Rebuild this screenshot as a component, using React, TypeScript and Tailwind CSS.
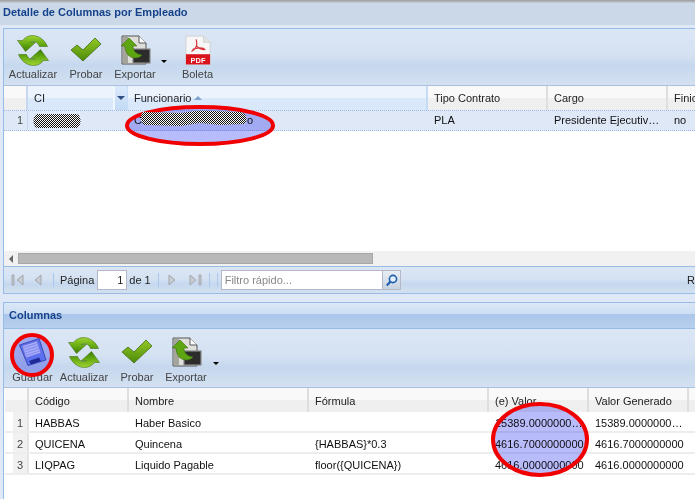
import React from "react";

const ARROW = "M30 11 C27 4 21 0 15 0 C11 0 7 2 5 5 L0 5 L8 16 L18 7 L13 7 C16 5 20 6 22 11 Z";

const Refresh = () => (
  <svg width="32" height="31" viewBox="-0.5 -0.5 32 31">
    <defs>
      <linearGradient id="rg" x1="0" y1="0" x2="0" y2="1">
        <stop offset="0" stopColor="#9fd433" />
        <stop offset="0.6" stopColor="#5fa50f" />
        <stop offset="1" stopColor="#3c7a06" />
      </linearGradient>
    </defs>
    <path d={ARROW} fill="url(#rg)" stroke="#46761a" strokeWidth="0.6" />
    <path d={ARROW} transform="rotate(180 15.5 15)" fill="url(#rg)" stroke="#46761a" strokeWidth="0.6" />
  </svg>
);

const Check = () => (
  <svg width="32" height="26" viewBox="0 0 32 26">
    <defs>
      <linearGradient id="cg" x1="0" y1="0" x2="0" y2="1">
        <stop offset="0" stopColor="#93c926" />
        <stop offset="1" stopColor="#4c8a08" />
      </linearGradient>
    </defs>
    <path d="M1 13 L7 8 L13 13 L25 1 L31 7 L13 24 Z" fill="url(#cg)" stroke="#3f6d10" strokeWidth="0.8" strokeLinejoin="round" />
  </svg>
);

const Export = () => (
  <svg width="31" height="30" viewBox="0 0 31 30">
    <path d="M2 1 H19 L26 8 V29 H2 Z" fill="#dededa" stroke="#555" strokeWidth="1" />
    <path d="M3 2 H8 V28 H3 Z" fill="#a5a59c" />
    <path d="M19 1 V8 H26" fill="#fff" stroke="#555" strokeWidth="1" />
    <rect x="13" y="14" width="17" height="14" fill="#2c2c2c" stroke="#8a8a8a" strokeWidth="1.2" />
    <path d="M9 3 L17 11 H13 C13 16 16 19 22 20 C19 24 12 24 8 20 C6 17 5 14 5 11 H1 Z" fill="#5ea512" stroke="#3c6d10" strokeWidth="0.6" />
  </svg>
);

const Pdf = () => (
  <svg width="26" height="31" viewBox="0 0 28 32">
    <path d="M1 0.5 H20 L27 7 V31 H1 Z" fill="#f7f7f7" stroke="#cfcfcf" />
    <path d="M20 0.5 V7 H27" fill="#e4e4e4" stroke="#cfcfcf" />
    <rect x="1" y="20" width="26" height="11" fill="#d8131b" />
    <path d="M12 4 C13 8 14 13 7 17 M12 10 C14 14 18 15 22 15 M8 15 C12 13 17 13 21 14" fill="none" stroke="#d8343a" strokeWidth="1.3" />
    <text x="14" y="29" textAnchor="middle" fill="#fff" fontSize="8" fontWeight="700" fontFamily="Liberation Sans, sans-serif">PDF</text>
  </svg>
);

const Floppy = () => (
  <svg width="28" height="28" viewBox="0 0 28 28">
    <path d="M0.5 7 L20 0.5 L27 22 L9 27.5 Z" fill="#7f96f2" stroke="#3a4cab" strokeWidth="0.8" />
    <path d="M3 8 L18 3 L22 15 L7 20 Z" fill="#e2e5ff" stroke="#7d88d0" strokeWidth="0.5" />
    <path d="M10 23 L20 19.5 L22 23 L12 26.5 Z" fill="#2c3a98" />
    <path d="M4 10 L18.5 5.5 M5 12.5 L19.5 8 M6 15 L20 10.5 M7 17.5 L21 13" stroke="#a8b1e8" strokeWidth="0.7" />
  </svg>
);

const Blob = ({ w, d }: { w: number; d: string }) => (
  <svg width={w} height="16" viewBox={`0 0 ${w} 16`} className="block">
    <defs>
      <pattern id={`ck${w}`} width="2" height="2" patternUnits="userSpaceOnUse">
        <rect width="2" height="2" fill="#fff" />
        <rect width="1" height="1" fill="#111" />
        <rect x="1" y="1" width="1" height="1" fill="#111" />
      </pattern>
    </defs>
    <path d={d} fill={`url(#ck${w})`} />
  </svg>
);

const Tool = ({ label, w, low, children }: { label: string; w: string; low?: boolean; children: React.ReactNode }) => (
  <div className={`flex flex-col items-center ${w}`}>
    <div className="h-[34px] flex items-center justify-center">{children}</div>
    <span className={`text-[11px] leading-[14px] text-[#444] whitespace-nowrap ${low ? "mt-[1px]" : ""}`}>{label}</span>
  </div>
);

const Caret = () => <div className="w-0 h-0 border-x-[3px] border-x-transparent border-t-[3px] border-t-black mt-[2px]" />;

const HCell = ({ w, children, active }: { w: string; children?: React.ReactNode; active?: boolean }) => (
  <div
    className={`${w} shrink-0 h-full flex items-center pl-[6px] text-[11px] text-[#222] border-r-2 whitespace-nowrap overflow-hidden ${
      active
        ? "border-[#c5daf5] bg-[linear-gradient(#ebf3fd_0,#ebf3fd_50%,#d9e8fb_50%,#d9e8fb_100%)]"
        : "border-[#dedede] bg-[linear-gradient(#f9f9f9_0,#f9f9f9_50%,#efefef_50%,#efefef_100%)]"
    }`}
  >
    {children}
  </div>
);

const Cell = ({ w, children }: { w: string; children?: React.ReactNode }) => (
  <div className={`${w} shrink-0 pl-[6px] text-[11px] text-[#111] whitespace-nowrap overflow-hidden`}>{children}</div>
);

const PageBtn = ({ d, className }: { d: string; className?: string }) => (
  <svg width="16" height="14" viewBox="0 0 16 14" className={`shrink-0 ${className ?? ""}`}>
    <path d={d} fill="#c8ccd2" stroke="#a2a7ae" strokeWidth="1" />
  </svg>
);

const Sep = ({ className }: { className: string }) => <div className={`w-px h-[14px] bg-[#a9c6ef] shrink-0 ${className}`} />;

const toolbarBg = "bg-[linear-gradient(#dbe6f5_0,#d5e2f2_45%,#c6d8ee_65%,#d3e1f1_100%)]";

const Row2 = ({ n, a, b, c, d, e }: { n: number; a: string; b: string; c: string; d: string; e: string }) => (
  <div className="h-[21px] flex items-center pt-[3px] border-b-2 border-[#ededed] bg-white">
    <div className="w-[24px] shrink-0 self-stretch -mt-[3px] flex justify-end border-r-2 border-[#e4e4e4] text-[11px] text-[#444]">
      <span className="w-[14px] pt-[3px] bg-[#f1f1f1] flex items-center justify-center">{n}</span>
    </div>
    <Cell w="w-[100px]">{a}</Cell>
    <Cell w="w-[180px]">{b}</Cell>
    <Cell w="w-[180px]">{c}</Cell>
    <Cell w="w-[100px]">{d}</Cell>
    <Cell w="w-[100px]">{e}</Cell>
  </div>
);

export default function App() {
  return (
    <div className="relative w-[695px] h-[499px] overflow-hidden bg-[#dfe8f6] font-['Liberation_Sans',Arial,sans-serif]">
      <div className="h-[3px] bg-[linear-gradient(#9a9a9a,#c8d2de)]" />
      <div className="h-[22px] bg-[#cbd8e7] flex items-center pl-[3px] pb-[3px] text-[11px] font-bold text-[#15428b]">
        Detalle de Columnas por Empleado
      </div>
      <div className="h-[3px] bg-[#dfe8f6]" />

      <div className="ml-[3px] border-l border-[#99bbe8] h-[238px] border-t bg-white flex flex-col">
        <div className={`h-[57px] shrink-0 ${toolbarBg} border-b border-[#a9c0de] flex items-start pt-[4px] pl-[4px]`}>
          <Tool label="Actualizar" w="w-[50px]"><Refresh /></Tool>
          <Tool label="Probar" w="w-[46px] ml-[5px]"><Check /></Tool>
          <div className="flex items-start ml-[4px]">
            <Tool label="Exportar" w="w-[44px]"><Export /></Tool>
            <div className="ml-[4px] mt-[25px]"><Caret /></div>
          </div>
          <div className="ml-[14px]"><Tool label="Boleta" w="w-[33px]"><Pdf /></Tool></div>
        </div>
        <div className="h-[24px] shrink-0 flex">
          <div className="w-[24px] shrink-0 border-r-2 border-[#c6d7ef] bg-[linear-gradient(#f9f9f9_0,#f9f9f9_50%,#efefef_50%,#efefef_100%)]" />
          <div className="w-[100px] shrink-0 h-full relative pl-[6px] flex items-center text-[11px] text-[#222] border-r border-[#c6dcf7] bg-[linear-gradient(#ebf3fd_0,#ebf3fd_50%,#d9e8fb_50%,#d9e8fb_100%)]">
            CI
            <div className="absolute right-0 top-0 h-full w-[14px] border-l-2 border-[#f0f6fd] bg-[linear-gradient(#dce9fa,#c3daf6)] flex items-center justify-center">
              <div className="w-0 h-0 border-x-[4px] border-x-transparent border-t-[4px] border-t-[#2d4f84]" />
            </div>
          </div>
          <HCell w="w-[300px]" active>
            Funcionario
            <div className="ml-[3px] w-0 h-0 border-x-[4px] border-x-transparent border-b-[4px] border-b-[#7ea3d4]" />
          </HCell>
          <HCell w="w-[120px]">Tipo Contrato</HCell>
          <HCell w="w-[120px]">Cargo</HCell>
          <HCell w="w-[40px]">Finic</HCell>
        </div>
        <div className="h-[21px] shrink-0 flex items-center bg-[#dfe8f6] border-y border-dotted border-[#a3bae9]">
          <div className="w-[24px] shrink-0 h-full flex items-center justify-end text-[11px] text-[#444] border-r border-[#c6d7ef]">
            <span className="w-[14px] flex justify-center">1</span>
          </div>
          <div className="w-[100px] shrink-0 pl-[4px]">
            <Blob w={50} d="M6 1 H44 C50 1 50 15 44 15 H6 C0 15 0 1 6 1 Z" />
          </div>
          <div className="w-[300px] shrink-0 pl-[6px] text-[11px] text-[#111] flex items-center relative">
            <span>C</span>
            <div className="absolute left-[12px] top-[-2px] z-10">
              <Blob w={108} d="M3 2 L40 3 L60 0.5 L100 2 C108 3 108 12 104 14 L80 15 L60 13 L40 16 L5 15 C0 13 0 4 3 2 Z" />
            </div>
            <span className="ml-[105px]">o</span>
          </div>
          <Cell w="w-[120px]">PLA</Cell>
          <Cell w="w-[120px]">Presidente Ejecutiv…</Cell>
          <Cell w="w-[40px]">no</Cell>
        </div>
        <div className="flex-1 bg-white" />
        <div className="h-[15px] shrink-0 bg-[#f1f1f1] flex items-center">
          <div className="w-[14px] flex justify-center">
            <div className="w-0 h-0 border-y-[4px] border-y-transparent border-r-[4px] border-r-[#666]" />
          </div>
          <div className="w-[355px] h-[11px] bg-[#b8b8b8] border border-[#a8a8a8]" />
        </div>
      </div>

      <div className={`ml-[3px] border-l border-y border-[#99bbe8] h-[28px] ${toolbarBg} flex items-center pl-[6px] text-[11px] text-[#222]`}>
        <PageBtn d="M2 2 H4 V12 H2 Z M13 2 V12 L7 7 Z" />
        <PageBtn className="ml-[3px]" d="M12 2 V12 L6 7 Z" />
        <Sep className="ml-[8px]" />
        <span className="ml-[6px]">Página</span>
        <input
          readOnly
          value="1"
          className="ml-[3px] w-[30px] h-[20px] bg-white border border-[#b5b8c8] text-right pr-[3px] text-[11px] text-[#222] outline-none"
        />
        <span className="ml-[2px]">de 1</span>
        <Sep className="ml-[7px]" />
        <PageBtn className="ml-[6px]" d="M4 2 V12 L10 7 Z" />
        <PageBtn className="ml-[6px]" d="M3 2 V12 L9 7 Z M12 2 H14 V12 H12 Z" />
        <Sep className="ml-[6px]" />
        <Sep className="ml-[7px]" />
        <div className="flex h-[20px] ml-[3px]">
          <div className="w-[162px] bg-white border border-[#b5b8c8] flex items-center pl-[3px] text-[#888]">Filtro rápido...</div>
          <div className="w-[18px] border border-l-0 border-[#b5b8c8] bg-[linear-gradient(#e8eef5,#c7d2df)] flex items-center justify-center">
            <svg width="13" height="13" viewBox="0 0 13 13">
              <circle cx="8" cy="5" r="3.6" fill="#e6f0fb" stroke="#1f5fb0" strokeWidth="1.6" />
              <path d="M5.5 7.5 L1.8 11.5" stroke="#1f5fb0" strokeWidth="2.2" />
            </svg>
          </div>
        </div>
        <span className="ml-auto">R</span>
      </div>

      <div className="h-[8px]" />

      <div className="ml-[3px] border-l border-t border-[#99bbe8]">
        <div className="h-[26px] border-b border-[#99bbe8] bg-[linear-gradient(#dae7f6_0,#cddef3_45%,#abc6ea_45%,#b8cfee_100%)] flex items-center pl-[5px] text-[11px] font-bold text-[#15428b]">
          Columnas
        </div>
        <div className={`h-[59px] ${toolbarBg} flex items-start pt-[6px] pl-[6px] border-b border-[#a9c0de]`}>
          <Tool low label="Guardar" w="w-[45px]"><Floppy /></Tool>
          <Tool low label="Actualizar" w="w-[50px] ml-[4px]"><Refresh /></Tool>
          <Tool low label="Probar" w="w-[46px] ml-[5px]"><Check /></Tool>
          <div className="flex items-start ml-[4px]">
            <Tool low label="Exportar" w="w-[44px]"><Export /></Tool>
            <div className="ml-[5px] mt-[25px]"><Caret /></div>
          </div>
        </div>
        <div className="bg-white pl-[1px]">
          <div className="h-[24px] flex">
            <HCell w="w-[24px]" />
            <HCell w="w-[100px] pt-[2px]">Código</HCell>
            <HCell w="w-[180px] pt-[2px]">Nombre</HCell>
            <HCell w="w-[180px] pt-[2px]">Fórmula</HCell>
            <HCell w="w-[100px] pt-[2px]">(e) Valor</HCell>
            <HCell w="w-[100px] pt-[2px]">Valor Generado</HCell>
            <HCell w="w-[10px]" />
          </div>
          <Row2 n={1} a="HABBAS" b="Haber Basico" c="" d="15389.0000000…" e="15389.0000000…" />
          <Row2 n={2} a="QUICENA" b="Quincena" c="{HABBAS}*0.3" d="4616.7000000000" e="4616.7000000000" />
          <Row2 n={3} a="LIQPAG" b="Liquido Pagable" c="floor({QUICENA})" d="4616.0000000000" e="4616.0000000000" />
          <div className="h-[30px] bg-white" />
        </div>
      </div>

      <svg width="695" height="499" className="absolute inset-0 pointer-events-none mix-blend-multiply">
        <g fill="#b9bcfb">
          <ellipse cx="200" cy="125.5" rx="73" ry="18.5" />
          <ellipse cx="32" cy="355" rx="20" ry="20" />
          <ellipse cx="540" cy="439.5" rx="47" ry="35.5" />
        </g>
      </svg>
      <svg width="695" height="499" className="absolute inset-0 pointer-events-none">
        <g fill="none" stroke="#f00000" strokeWidth="4">
          <ellipse cx="200" cy="125.5" rx="73" ry="18.5" />
          <ellipse cx="32" cy="355" rx="20" ry="20" />
          <ellipse cx="540" cy="439.5" rx="47" ry="35.5" />
        </g>
      </svg>
    </div>
  );
}
